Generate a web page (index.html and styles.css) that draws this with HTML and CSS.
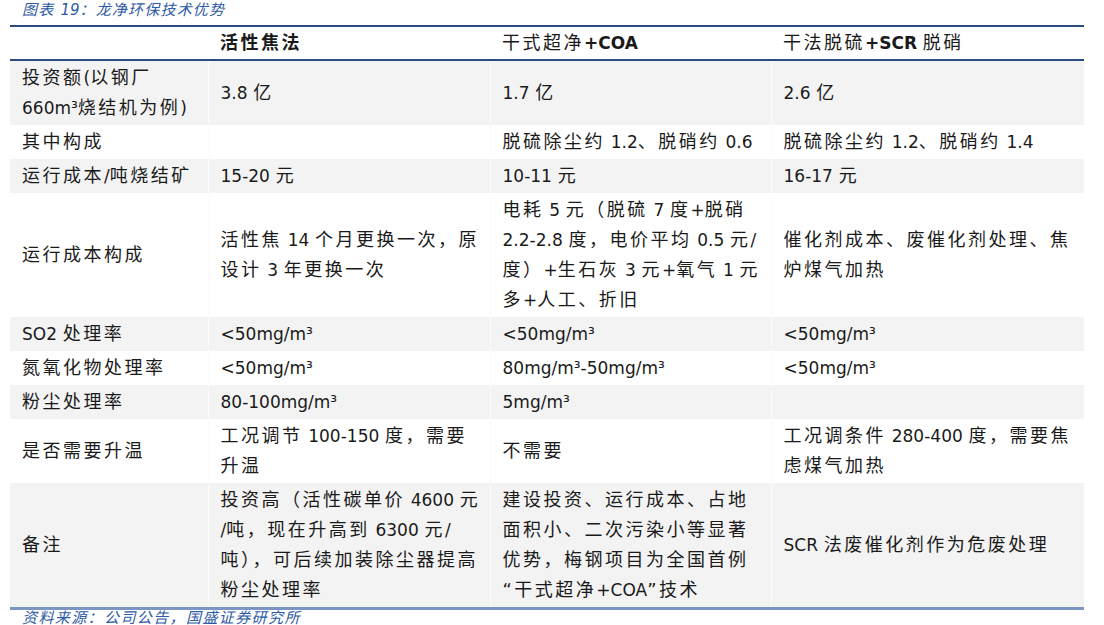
FILE: index.html
```html
<!DOCTYPE html>
<html lang="zh">
<head>
<meta charset="utf-8">
<title>龙净环保技术优势</title>
<link rel="stylesheet" href="styles.css">
</head>
<body>
<div class="page">
  <div class="caption">图表 <span class="n">19</span>：龙净环保技术优势</div>
  <table class="tbl">
    <colgroup>
      <col class="c1"><col class="c2"><col class="c3"><col class="c4">
    </colgroup>
    <thead>
      <tr>
        <th></th>
        <th class="b">活性焦法</th>
        <th>干式超净<span class="n b">+COA</span></th>
        <th>干法脱硫<span class="n b">+SCR</span> 脱硝</th>
      </tr>
    </thead>
    <tbody>
      <tr class="g">
        <td>投资额<span class="n">(</span>以钢厂<br><span class="n">660m³</span>烧结机为例<span class="n">)</span></td>
        <td><span class="n">3.8</span> 亿</td>
        <td><span class="n">1.7</span> 亿</td>
        <td><span class="n">2.6</span> 亿</td>
      </tr>
      <tr>
        <td>其中构成</td>
        <td></td>
        <td>脱硫除尘约 <span class="n">1.2</span>、脱硝约 <span class="n">0.6</span></td>
        <td>脱硫除尘约 <span class="n">1.2</span>、脱硝约 <span class="n">1.4</span></td>
      </tr>
      <tr class="g">
        <td>运行成本<span class="n">/</span>吨烧结矿</td>
        <td><span class="n">15-20</span> 元</td>
        <td><span class="n">10-11</span> 元</td>
        <td><span class="n">16-17</span> 元</td>
      </tr>
      <tr>
        <td>运行成本构成</td>
        <td>活性焦 <span class="n">14</span> 个月更换一次，原<br>设计 <span class="n">3</span> 年更换一次</td>
        <td>电耗 <span class="n">5</span> 元（脱硫 <span class="n">7</span> 度<span class="n">+</span>脱硝<br><span class="n">2.2-2.8</span> 度，电价平均 <span class="n">0.5</span> 元<span class="n">/</span><br>度）<span class="n">+</span>生石灰 <span class="n">3</span> 元<span class="n">+</span>氧气 <span class="n">1</span> 元<br>多<span class="n">+</span>人工、折旧</td>
        <td>催化剂成本、废催化剂处理、焦<br>炉煤气加热</td>
      </tr>
      <tr class="g">
        <td><span class="n">SO2</span> 处理率</td>
        <td><span class="n">&lt;50mg/m³</span></td>
        <td><span class="n">&lt;50mg/m³</span></td>
        <td><span class="n">&lt;50mg/m³</span></td>
      </tr>
      <tr>
        <td>氮氧化物处理率</td>
        <td><span class="n">&lt;50mg/m³</span></td>
        <td><span class="n">80mg/m³-50mg/m³</span></td>
        <td><span class="n">&lt;50mg/m³</span></td>
      </tr>
      <tr class="g">
        <td>粉尘处理率</td>
        <td><span class="n">80-100mg/m³</span></td>
        <td><span class="n">5mg/m³</span></td>
        <td></td>
      </tr>
      <tr>
        <td>是否需要升温</td>
        <td>工况调节 <span class="n">100-150</span> 度，需要<br>升温</td>
        <td>不需要</td>
        <td>工况调条件 <span class="n">280-400</span> 度，需要焦<br>虑煤气加热</td>
      </tr>
      <tr class="g last">
        <td>备注</td>
        <td>投资高（活性碳单价 <span class="n">4600</span> 元<br><span class="n">/</span>吨，现在升高到 <span class="n">6300</span> 元<span class="n">/</span><br>吨），可后续加装除尘器提高<br>粉尘处理率</td>
        <td>建设投资、运行成本、占地<br>面积小、二次污染小等显著<br>优势，梅钢项目为全国首例<br>“干式超净<span class="n">+COA</span>”技术</td>
        <td><span class="n">SCR</span> 法废催化剂作为危废处理</td>
      </tr>
    </tbody>
  </table>
  <div class="source">资料来源：公司公告，国盛证券研究所</div>
</div>
</body>
</html>
```

FILE: styles.css
```css
html, body {
  margin: 0;
  padding: 0;
  background: #ffffff;
}

.page {
  padding: 0 0 0 10px;
  width: 1074px;
  font-family: "DejaVu Sans", "Noto Sans CJK SC", sans-serif;
  color: #1a1a1a;
}

.caption {
  font-style: italic;
  color: #2f5ba6;
  font-size: 15px;
  letter-spacing: 1.2px;
  line-height: 20px;
  height: 25px;
  padding-left: 12px;
}

.caption .n {
  font-size: 15px;
  letter-spacing: 0;
}

.tbl {
  width: 1074px;
  border-collapse: collapse;
  table-layout: fixed;
}

.c1 { width: 198px; }
.c2 { width: 282px; }
.c3 { width: 281px; }
.c4 { width: 313px; }

.tbl th,
.tbl td {
  font-size: 18px;
  letter-spacing: 2.5px;
  word-spacing: -2.5px;
  line-height: 30px;
  padding: 2px 0 2px 12px;
  text-align: left;
  vertical-align: middle;
  white-space: nowrap;
}

.tbl th {
  font-weight: normal;
  border-top: 2px solid #2b4c7e;
  border-bottom: 2px solid #2b4c7e;
  padding-top: 1px;
  padding-bottom: 1px;
}

.tbl td + td {
  border-left: 1px solid #fbfbfb;
}

.tbl .b {
  font-weight: bold;
}

.tbl .n {
  font-size: 17px;
  letter-spacing: 0;
  word-spacing: 0;
}

.tbl tr.g td {
  background: #f3f3f3;
}

.tbl tr.last td {
  border-bottom: 3px solid #7b96c2;
}

.source {
  font-style: italic;
  color: #2f5ba6;
  font-size: 15px;
  letter-spacing: 1.4px;
  line-height: 16px;
  padding-left: 12px;
}
```
